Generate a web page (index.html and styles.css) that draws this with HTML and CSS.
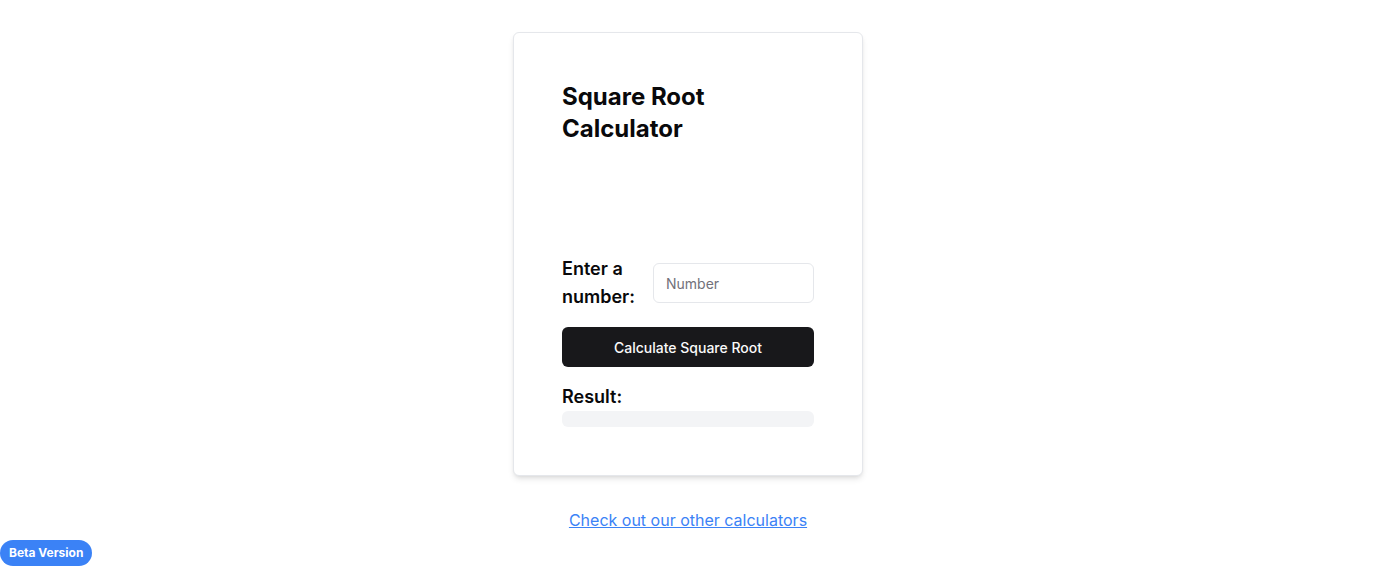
FILE: index.html
```html
<!DOCTYPE html>
<html lang="en">
<head>
<meta charset="utf-8">
<title>Square Root Calculator</title>
<link rel="stylesheet" href="styles.css">
</head>
<body>
<main class="page">
  <section class="card">
    <h1 class="title">Square Root Calculator</h1>
    <div class="spacer"></div>
    <div class="field">
      <label class="label" for="num">Enter a number:</label>
      <input class="input" id="num" type="number" placeholder="Number">
    </div>
    <button class="button" type="button">Calculate Square Root</button>
    <h2 class="result-label">Result:</h2>
    <div class="result"></div>
  </section>
  <a class="link" href="#">Check out our other calculators</a>
</main>
<div class="badge">Beta Version</div>
</body>
</html>
```

FILE: styles.css
```css
* { box-sizing: border-box; }
html, body { margin: 0; padding: 0; background: #fff; }
body {
  font-family: Inter, "Noto Sans", "Liberation Sans", sans-serif;
  color: #09090b;
}
.page {
  display: flex;
  flex-direction: column;
  align-items: center;
  padding-top: 32px;
}
.card {
  width: 350px;
  border: 1px solid #e5e7eb;
  border-radius: 6px;
  background: #fff;
  box-shadow: 0 4px 6px -1px rgba(0,0,0,0.1), 0 2px 4px -2px rgba(0,0,0,0.1);
  padding: 48px;
  display: flex;
  flex-direction: column;
}
.title {
  margin: 0;
  font-size: 24px;
  line-height: 32px;
  font-weight: 700;
  width: 180px;
}
.spacer { height: 110px; }
.field {
  display: flex;
  align-items: center;
  gap: 16px;
}
.label {
  flex: 1;
  font-size: 18px;
  line-height: 28px;
  font-weight: 600;
}
.input {
  width: 161px;
  height: 40px;
  border: 1px solid #e5e7eb;
  border-radius: 6px;
  padding: 0 12px;
  font-family: inherit;
  font-size: 14px;
  color: #09090b;
  background: #fff;
  outline: none;
}
.input::placeholder { color: #71717a; }
.button {
  margin-top: 16px;
  height: 40px;
  border: none;
  border-radius: 6px;
  background: #18181b;
  color: #fafafa;
  font-family: inherit;
  font-size: 14px;
  font-weight: 500;
  cursor: pointer;
}
.result-label {
  margin: 16px 0 0;
  font-size: 18px;
  line-height: 28px;
  font-weight: 600;
}
.result {
  height: 16px;
  border-radius: 6px;
  background: #f3f4f6;
}
.link {
  margin-top: 32px;
  font-size: 16px;
  line-height: 24px;
  color: #3b82f6;
  text-decoration: underline;
}
.badge {
  position: fixed;
  left: 0;
  bottom: 0;
  height: 26px;
  padding: 0 9px 1px;
  display: flex;
  align-items: center;
  background: #3b82f6;
  color: #fff;
  font-size: 12px;
  font-weight: 700;
  border-radius: 13px;
}
```
